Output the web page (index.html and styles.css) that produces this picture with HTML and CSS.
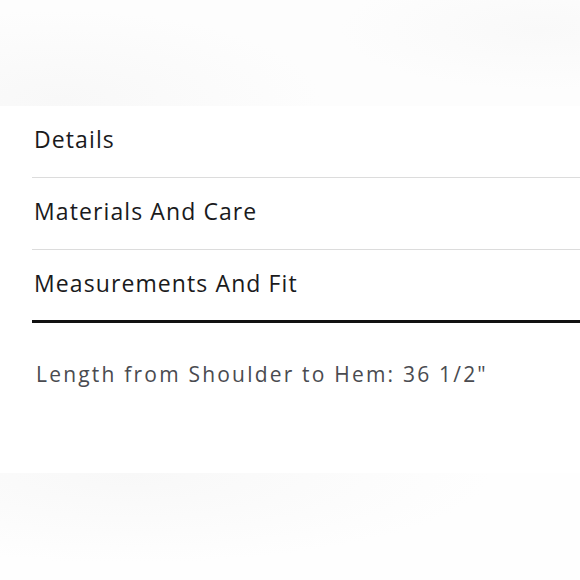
FILE: index.html
```html
<!DOCTYPE html>
<html lang="en">
<head>
<meta charset="utf-8">
<title>Product details</title>
<link rel="stylesheet" href="styles.css">
</head>
<body>
<div class="band band-top"></div>
<section class="accordion">
  <div class="row">Details</div>
  <div class="row">Materials And Care</div>
  <div class="row row-open">Measurements And Fit</div>
  <p class="measure">Length from Shoulder to Hem: 36 1/2"</p>
</section>
<div class="band band-bottom"></div>
</body>
</html>
```
FILE: styles.css
```css
html, body {
  margin: 0;
  padding: 0;
  background: #ffffff;
}
body {
  width: 580px;
  height: 580px;
  overflow: hidden;
  font-family: "Open Sans", "Liberation Sans", sans-serif;
}
.band-top {
  height: 106px;
  background:
    radial-gradient(ellipse 260px 90px at 60px 100px, #f8f8f8, rgba(250,250,250,0) 100%),
    radial-gradient(ellipse 200px 60px at 540px 30px, #f9f9f9, rgba(250,250,250,0) 100%),
    #fdfdfd;
}
.accordion {
  padding-left: 32px;
  height: 367px;
}
.row {
  padding: 19px 0 24px 2px;
  line-height: 28px;
  font-size: 23px;
  letter-spacing: 1.1px;
  color: #1a1a1c;
  border-bottom: 1px solid #dcdcdc;
}
.row-open {
  padding-bottom: 23px;
  border-bottom: 3px solid #111111;
}
.measure {
  margin: 39px 0 0 4px;
  font-size: 21px;
  line-height: 24px;
  letter-spacing: 2.2px;
  color: #4a4b50;
}
.band-bottom {
  height: 107px;
  background:
    radial-gradient(ellipse 360px 90px at 130px 0px, #f8f8f8, rgba(252,252,252,0) 100%),
    #fefefe;
}
```
